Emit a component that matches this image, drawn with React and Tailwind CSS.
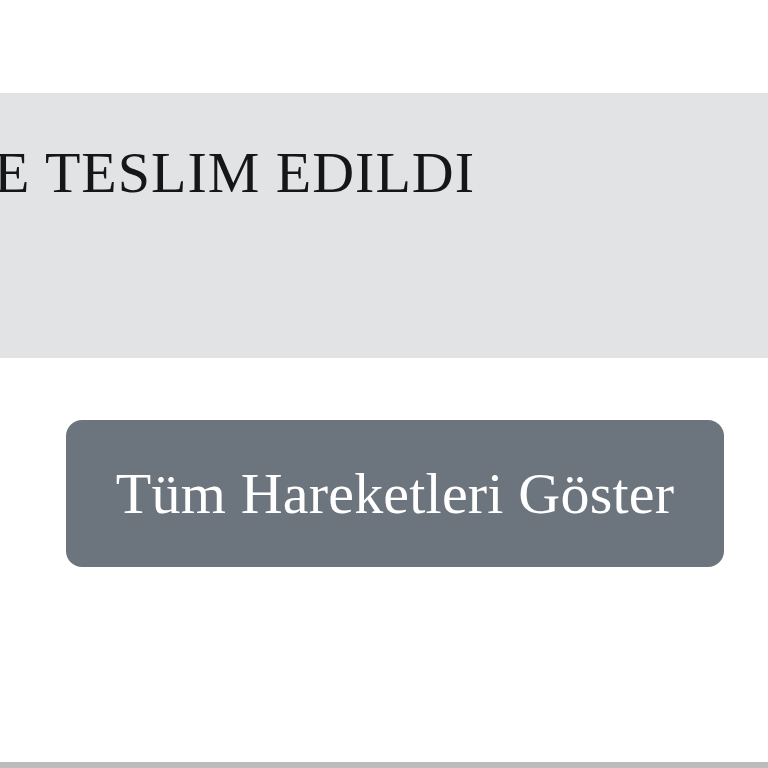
import React from 'react';

const App = () => {
  return (
    <div className="w-[768px] h-[768px] bg-white overflow-hidden flex flex-col border-b-[6px] border-[#bcbcbc]" style={{ fontFamily: '"Liberation Serif", "Times New Roman", serif' }}>
      <div className="mt-[93px] h-[265px] bg-[#e2e3e5] pt-[51px] overflow-hidden">
        <p className="whitespace-nowrap text-[58px] leading-none tracking-[1px] text-[#161616] -ml-[6px]">E TESLIM EDILDI</p>
      </div>
      <div className="pt-[62px] pl-[66px]">
        <button className="w-[658px] h-[147px] rounded-[16px] bg-[#6c757d] text-white text-[58px] leading-none tracking-[0.2px] flex items-center justify-center">
          Tüm Hareketleri Göster
        </button>
      </div>
    </div>
  );
};

export default App;
